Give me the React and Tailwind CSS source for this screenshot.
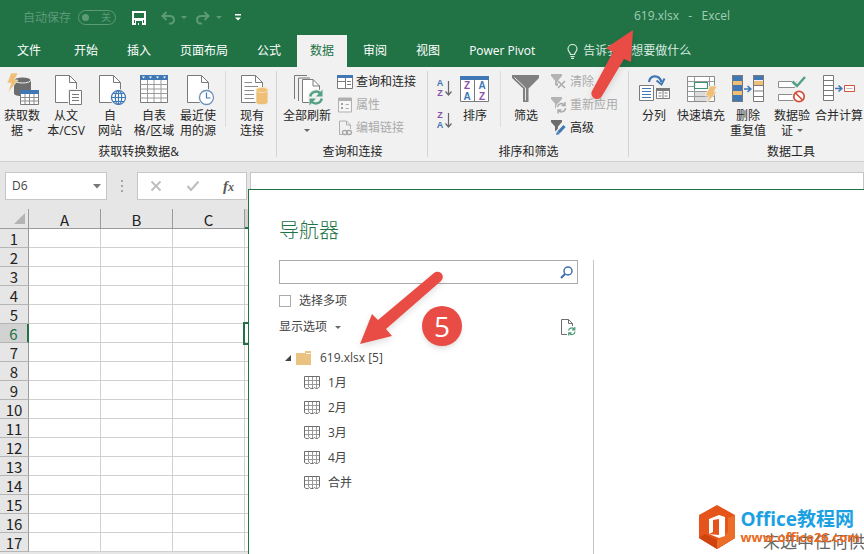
import { useState } from "react";
import clsx from "clsx";

const TABS = ["开始", "插入", "页面布局", "公式", "数据", "审阅", "视图", "Power Pivot"];
const COLUMNS = ["A", "B", "C", "D"];
const ROWS = Array.from({ length: 17 }, (_, i) => i + 1);
const SHEETS = ["1月", "2月", "3月", "4月", "合并"];

/* ---------- icons ---------- */

function Icon({ size = 32, children }) {
  return (
    <svg width={size} height={size} viewBox={`0 0 ${size} ${size}`} fill="none" className="shrink-0 overflow-visible" aria-hidden="true">
      {children}
    </svg>
  );
}

function Page({ x = 5.5 }) {
  return (
    <g transform={`translate(${x} 2.5)`} stroke="#7a7a7a">
      <path d="M0 0H14L21 7V27H0Z" fill="#fff" />
      <path d="M14 0V7H21" />
    </g>
  );
}

function Caret({ className = "text-[#666666]" }) {
  return (
    <svg width="6" height="3" viewBox="0 0 6 3" className={clsx("shrink-0", className)} aria-hidden="true">
      <path d="M0 0H6L3 3Z" fill="currentColor" />
    </svg>
  );
}

const GetDataIcon = () => (
  <Icon>
    <path d="M8 7V20.500C8 24 25 24 25 20.500V7Z" fill="#6d6d6d" />
    <ellipse cx="16.500" cy="7" rx="8.500" ry="3" fill="#6d6d6d" stroke="#f1f1f1" />
    <path d="M5 0H12L8.500 7H12L2 20L5 10H1Z" fill="#eebf74" stroke="#f1f1f1" strokeWidth="0.6" />
    <path d="M14.500 17.500H32.500V31.500H14.500Z" fill="#fff" stroke="#7a7a7a" />
    <path d="M14 17H33V21H14Z" fill="#3f78b5" />
    <path d="M14.500 24.500H32.500M14.500 28H32.500M19 21V31M23.500 21V31M28 21V31" stroke="#8c8c8c" />
  </Icon>
);

const FromTextIcon = () => (
  <Icon>
    <Page />
    <path d="M18 16H33V32H18Z" fill="#f1f1f1" />
    <path d="M19.500 17.500H31.500V31.500H19.500Z" fill="#fff" stroke="#7a7a7a" />
    <path d="M22 21.500H29M22 24.500H29M22 27.500H29" stroke="#7a7a7a" />
  </Icon>
);

const FromWebIcon = () => (
  <Icon>
    <Page />
    <circle cx="24.500" cy="24.500" r="8.500" fill="#f1f1f1" />
    <g stroke="#3f78b5" strokeWidth="1.2">
      <circle cx="24.500" cy="24.500" r="7" fill="#fff" />
      <ellipse cx="24.500" cy="24.500" rx="3.200" ry="7" />
      <path d="M17.500 24.500H31.500M24.500 17.500V31.500M19 20.500H30M19 28.500H30" />
    </g>
  </Icon>
);

const FromTableIcon = () => (
  <Icon>
    <path d="M2.500 2.500H29.500V29.500H2.500Z" fill="#fff" stroke="#7a7a7a" />
    <path d="M2 2H30V7H2Z" fill="#3f78b5" />
    <path d="M4 3.500H7L5.500 5.500ZM11 3.500H14L12.500 5.500ZM18 3.500H21L19.500 5.500ZM25 3.500H28L26.500 5.500Z" fill="#fff" />
    <path d="M2.500 11.500H29.500M2.500 16H29.500M2.500 20.500H29.500M2.500 25H29.500M9.500 7V29M16 7V29M23 7V29" stroke="#9a9a9a" />
  </Icon>
);

const RecentIcon = () => (
  <Icon>
    <Page />
    <circle cx="24.500" cy="24.500" r="8.500" fill="#f1f1f1" />
    <circle cx="24.500" cy="24.500" r="7" fill="#fff" stroke="#6b93bd" strokeWidth="1.300" />
    <path d="M24.500 19.500V25H28.500" stroke="#3f78b5" strokeWidth="1.200" />
  </Icon>
);

const ConnectionsIcon = () => (
  <Icon>
    <Page />
    <path d="M8.500 9.500H16M8.500 13.500H22M8.500 17.500H18M8.500 21.500H18M8.500 25.500H18" stroke="#8c8c8c" />
    <path d="M20 17V29.500C20 32.500 32 32.500 32 29.500V17Z" fill="#eebf74" stroke="#f1f1f1" strokeWidth="0.800" />
    <ellipse cx="26" cy="17" rx="6" ry="2.500" fill="#eebf74" stroke="#f8e3bf" />
  </Icon>
);

const RefreshAllIcon = () => (
  <Icon>
    <path d="M3.500 26V2.500H16M7.500 28V5H19" stroke="#7a7a7a" />
    <path d="M11.500 6.500H22L28.500 13V29.500H11.500Z" fill="#fff" stroke="#7a7a7a" />
    <path d="M22 6.500V13H28.500" stroke="#7a7a7a" />
    <circle cx="25" cy="24.500" r="8.500" fill="#f1f1f1" />
    <path d="M19.200 23.500A6 6 0 0 1 29.500 20.500M30.800 25.500A6 6 0 0 1 20.500 28.500" stroke="#55a183" strokeWidth="2.400" />
    <path d="M31.500 16.500V23.500H25ZM18.500 32.500V25.500H25Z" fill="#55a183" />
  </Icon>
);

const SortIcon = () => (
  <Icon>
    <path d="M1.500 3.500H29.500V28.500H1.500ZM15.500 6V28" fill="#fff" stroke="#7a7a7a" />
    <path d="M1 3H30V7H1Z" fill="#3f78b5" />
    <g className="font-['Liberation_Sans'] text-[10px] font-bold" textAnchor="middle">
      <text x="8" y="16" fill="#8a52ab">Z</text>
      <text x="8" y="27" fill="#3f78b5">A</text>
      <text x="23" y="16" fill="#3f78b5">A</text>
      <text x="23" y="27" fill="#8a52ab">Z</text>
    </g>
  </Icon>
);

const SortLettersIcon = ({ top, bottom }) => (
  <svg width="16" height="18" viewBox="0 0 16 18" fill="none" className="overflow-visible" aria-hidden="true">
    <g className="font-['Liberation_Sans'] text-[9px] font-bold" textAnchor="middle">
      <text x="4" y="7" fill={top === "A" ? "#3f78b5" : "#8a52ab"}>{top}</text>
      <text x="4" y="17" fill={bottom === "A" ? "#3f78b5" : "#8a52ab"}>{bottom}</text>
    </g>
    <path d="M12.500 2V16M9.500 12.500L12.500 16L15.500 12.500" stroke="#666" strokeWidth="1.200" />
  </svg>
);

const FilterIcon = () => (
  <Icon>
    <path d="M2 2H29V5L18.500 15.500V29H13V15.500L2 5Z" fill="#808080" />
    <path d="M4.500 4.500L15.500 15V27.500" stroke="#e6e6e6" />
  </Icon>
);

const SplitIcon = () => (
  <Icon>
    <path d="M1.500 12.500H15.500V27.500H1.500Z" fill="#fff" stroke="#7a7a7a" />
    <path d="M4 15.500H13M4 18.500H13M4 21.500H13M4 24.500H13" stroke="#3f78b5" />
    <path d="M18.500 15.500H31.500V25.500H18.500Z" fill="#fff" stroke="#7a7a7a" />
    <path d="M18 15H32V18H18Z" fill="#7a7a7a" />
    <path d="M20.500 20H23.500M20.500 23H23.500M26.500 20H29.500M26.500 23H29.500M25 18V25" stroke="#7a7a7a" />
    <path d="M11 9C12 2 21 1 23.500 9" stroke="#3f78b5" strokeWidth="2.200" />
    <path d="M18.500 7.500L23.500 11.500L26.500 5.500" stroke="#3f78b5" strokeWidth="2" />
  </Icon>
);

const FlashFillIcon = () => (
  <Icon>
    <path d="M2.500 3.500H29.500V28.500H2.500Z" fill="#fff" stroke="#8c8c8c" />
    <path d="M10 18H24V28H10Z" fill="#dcdcdc" />
    <path d="M2.500 8.500H29.500M2.500 18.500H29.500M2.500 23.500H29.500M9.500 3V28M2.500 13.500H9M24.500 3V15" stroke="#9a9a9a" />
    <path d="M9.500 9.500H22.500V15.500H9.500Z" fill="#fff" stroke="#3f9470" strokeWidth="1.200" />
    <path d="M25 13H32L29 19H32L21 31L24 23H20Z" fill="#eebf74" stroke="#f1f1f1" strokeWidth="0.800" />
  </Icon>
);

const RemoveDuplicatesIcon = () => (
  <Icon>
    <path d="M0 2H11V29H0ZM21 2H32V7H21Z" fill="#3f78b5" />
    <path d="M1 8H10V12H1ZM1 18H10V22H1ZM22 8H31V12H22Z" fill="#eebf74" />
    <path d="M0.500 2.500H10.500V28.500H0.500ZM21.500 2.500H31.500V28.500H21.500Z" stroke="#7a7a7a" />
    <path d="M22 13H31V28H22Z" fill="#fff" />
    <path d="M22 12.500H31M22 18H31M22 23.500H31" stroke="#7a7a7a" />
    <path d="M12 16H18M15.500 13L18.800 16L15.500 19" stroke="#3f78b5" strokeWidth="1.600" />
  </Icon>
);

const ValidationIcon = () => (
  <Icon>
    <path d="M2.500 8.500H20.500V14.500H2.500ZM2.500 21.500H20.500V27.500H2.500Z" fill="#fff" stroke="#8c8c8c" />
    <path d="M16.500 8L21 13L29 4" stroke="#f1f1f1" strokeWidth="5" />
    <path d="M16.500 8.500L21 13L29 4" stroke="#55a183" strokeWidth="2.500" />
    <circle cx="23" cy="23.500" r="7" fill="#f1f1f1" />
    <circle cx="23" cy="23.500" r="5.200" fill="#fff" stroke="#d0513c" strokeWidth="1.700" />
    <path d="M19.500 20L26.500 27" stroke="#d0513c" strokeWidth="1.700" />
  </Icon>
);

const ConsolidateIcon = () => (
  <Icon>
    <path d="M0.500 2.500H10.500V27.500H0.500ZM0.500 7.500H10.500M0.500 12.500H10.500M0.500 17.500H10.500M0.500 22.500H10.500" fill="#fff" stroke="#7a7a7a" />
    <path d="M12 15.500H18M15.500 12.500L18.800 15.500L15.500 18.500" stroke="#3f78b5" strokeWidth="1.600" />
    <path d="M21.500 12.500H31.500V18.500H21.500Z" fill="#fff" stroke="#d0513c" />
    <path d="M23.500 15.500H29.500" stroke="#bbb" />
  </Icon>
);

const QueriesIcon = () => (
  <Icon size={16}>
    <path d="M0.500 1.500H15.500V14.500H0.500Z" fill="#fff" stroke="#7a7a7a" />
    <path d="M0 1H16V4H0Z" fill="#3f78b5" />
    <path d="M0.500 7.500H8M8.500 4V14M10 7.500H14M10 10.500H14" stroke="#7a7a7a" />
  </Icon>
);

const PropertiesIcon = () => (
  <Icon size={16}>
    <path d="M1.500 1H14.500V15H1.500Z" fill="#f6f6f6" stroke="#b0b0b0" />
    <path d="M1 1H15V4H1Z" fill="#b0b0b0" />
    <path d="M4 6H6V8H4ZM4 10H6V12H4Z" fill="#a0a0a0" />
    <path d="M8.500 7.500H12M8.500 11.500H12" stroke="#b0b0b0" />
  </Icon>
);

const EditLinksIcon = () => (
  <Icon size={16}>
    <path d="M6 14.500H2.500V1H9.500L13.500 5V9M9.500 1V5H13.500" stroke="#b0b0b0" />
    <rect x="5.500" y="10.500" width="5" height="4" rx="2" stroke="#a8a8a8" strokeWidth="1.300" />
    <rect x="9.500" y="10.500" width="5" height="4" rx="2" stroke="#a8a8a8" strokeWidth="1.300" />
  </Icon>
);

const SmallFunnel = ({ color, children }) => (
  <Icon size={16}>
    <path d="M0 0H11V2L7 6.500V13L4 11V6.500L0 2Z" fill={color} />
    {children}
  </Icon>
);

const ClearIcon = () => (
  <SmallFunnel color="#b4b4b4">
    <path d="M7 7L14 14M14 7L7 14" stroke="#f1f1f1" strokeWidth="3.500" />
    <path d="M7 7L14 14M14 7L7 14" stroke="#ababab" strokeWidth="1.600" />
  </SmallFunnel>
);

const ReapplyIcon = () => (
  <SmallFunnel color="#b4b4b4">
    <circle cx="10.500" cy="10.500" r="5.500" fill="#f1f1f1" />
    <path d="M6.500 10A4 4 0 0 1 13.500 8M14.500 11A4 4 0 0 1 7.500 13.500M14 5V8.500H10.500M7 16.500V13H10.500" stroke="#ababab" strokeWidth="1.500" />
  </SmallFunnel>
);

const AdvancedIcon = () => (
  <SmallFunnel color="#6d6d6d">
    <path d="M6 14L14 5.500" stroke="#f1f1f1" strokeWidth="6" />
    <path d="M7.500 12.500L13.500 6" stroke="#3f78b5" strokeWidth="3.200" />
    <path d="M5 15L6 11.500L8.800 14Z" fill="#3f78b5" />
  </SmallFunnel>
);

const SheetIcon = () => (
  <Icon size={16}>
    <path d="M0.500 1.500H15.500V11.500C14.500 14 11.500 14 10.500 12.500C9.500 14 6.500 14 5.500 12.500C4.500 14 2 14 0.500 12.500Z" fill="#fff" stroke="#6d6d6d" />
    <path d="M1 5.500H15M1 9.500H15M4.500 2V12M8.500 2V13M12.500 2V13" stroke="#999" />
  </Icon>
);

/* ---------- ribbon ---------- */

function BigButton({ icon, lines, caret, caretBelow, wide }) {
  return (
    <button type="button" className={clsx("flex flex-col items-center gap-[3px] pt-[6px] shrink-0", wide ? "w-[50px]" : "w-11")}>
      {icon}
      <span className="flex flex-col items-center leading-[15px] whitespace-nowrap">
        {lines.map((line, i) => (
          <span key={line} className="flex items-center gap-1">
            {line}
            {caret && i === lines.length - 1 && <Caret />}
          </span>
        ))}
        {caretBelow && <span className="flex h-[15px] items-center"><Caret /></span>}
      </span>
    </button>
  );
}

function SmallButton({ icon, label, disabled }) {
  return (
    <button type="button" disabled={disabled} className={clsx("flex h-[23px] items-center gap-[3px] whitespace-nowrap", disabled && "text-[#ababab]")}>
      {icon}
      {label}
    </button>
  );
}

function Group({ label, className, children }) {
  return (
    <section className={clsx("relative flex shrink-0 flex-col", className)}>
      <div className="flex h-[76px] items-start">{children}</div>
      <h2 className="text-center leading-[18px]">{label}</h2>
      <div className="absolute top-1 right-0 bottom-1 w-px bg-[#d4d4d4]" />
    </section>
  );
}

const Divider = () => <div className="mt-1 h-[56px] w-px shrink-0 bg-[#dcdcdc]" />;

function Ribbon() {
  return (
    <div className="flex h-[95px] shrink-0 overflow-hidden border-b border-[#d0d0d0] bg-[#f1f1f1] text-[#262626]">
      <Group label="获取转换数据&" className="w-[277px]">
        <BigButton icon={<GetDataIcon />} lines={["获取数", "据"]} caret />
        <BigButton icon={<FromTextIcon />} lines={["从文", "本/CSV"]} />
        <BigButton icon={<FromWebIcon />} lines={["自", "网站"]} />
        <BigButton icon={<FromTableIcon />} lines={["自表", "格/区域"]} />
        <BigButton icon={<RecentIcon />} lines={["最近使", "用的源"]} />
        <div className="flex gap-1 pl-[5px]">
          <Divider />
          <BigButton icon={<ConnectionsIcon />} lines={["现有", "连接"]} />
        </div>
      </Group>
      <Group label="查询和连接" className="w-[151px]">
        <div className="flex pl-[5px]">
          <BigButton icon={<RefreshAllIcon />} lines={["全部刷新"]} caretBelow wide />
        </div>
        <div className="flex flex-col pt-[3px] pl-[5px]">
          <SmallButton icon={<QueriesIcon />} label="查询和连接" />
          <SmallButton icon={<PropertiesIcon />} label="属性" disabled />
          <SmallButton icon={<EditLinksIcon />} label="编辑链接" disabled />
        </div>
      </Group>
      <Group label="排序和筛选" className="w-[201px]">
        <div className="flex flex-col gap-[14px] pt-[12px] pl-2">
          <button type="button" aria-label="升序"><SortLettersIcon top="A" bottom="Z" /></button>
          <button type="button" aria-label="降序"><SortLettersIcon top="Z" bottom="A" /></button>
        </div>
        <div className="flex gap-[3px] pl-[1px]">
          <BigButton icon={<SortIcon />} lines={["排序"]} />
          <Divider />
          <BigButton icon={<FilterIcon />} lines={["筛选"]} />
        </div>
        <div className="flex flex-col pt-[3px] pl-[3px]">
          <SmallButton icon={<ClearIcon />} label="清除" disabled />
          <SmallButton icon={<ReapplyIcon />} label="重新应用" disabled />
          <SmallButton icon={<AdvancedIcon />} label="高级" />
        </div>
      </Group>
      <Group label="数据工具" className="w-[324px]">
        <div className="flex pl-[3px]">
          <BigButton icon={<SplitIcon />} lines={["分列"]} />
          <BigButton icon={<FlashFillIcon />} lines={["快速填充"]} wide />
          <BigButton icon={<RemoveDuplicatesIcon />} lines={["删除", "重复值"]} />
          <BigButton icon={<ValidationIcon />} lines={["数据验", "证"]} caret />
          <BigButton icon={<ConsolidateIcon />} lines={["合并计算"]} wide />
        </div>
      </Group>
    </div>
  );
}

/* ---------- header ---------- */

function TitleBar() {
  return (
    <div className="flex h-[35px] items-center justify-between pr-[134px] pl-[23px] text-[#5d9a78]">
      <div className="flex items-center">
        <span>自动保存</span>
        <button type="button" className="ml-[7px] flex h-[15px] w-[38px] items-center justify-between rounded-full border border-[#5d9a78] pr-1 pl-[3px] text-[10px]">
          <span className="size-[7px] rounded-full bg-[#5d9a78]" />
          关
        </button>
        <button type="button" aria-label="保存" className="ml-4">
          <svg width="14" height="14" viewBox="0 0 14 14" fill="none">
            <path d="M1 1H13V13H1Z" stroke="#fff" strokeWidth="2" />
            <path d="M1 7H13V9H1ZM3 9H11V13H3Z" fill="#fff" />
            <path d="M4 10H10V14H7V12H6V14H4Z" fill="#217346" />
          </svg>
        </button>
        <button type="button" aria-label="撤消" className="ml-[15px]">
          <svg width="14" height="14" viewBox="0 0 14 14" fill="none" stroke="currentColor" strokeWidth="2">
            <path d="M5.500 1L1.500 5L5.500 9M1.500 5H8.500C11.500 5 13 6.500 13 9C13 11.500 11 13 8 12.500" />
          </svg>
        </button>
        <span className="ml-[6px]"><Caret className="text-[#5d9a78]" /></span>
        <button type="button" aria-label="恢复" className="ml-[9px]">
          <svg width="14" height="14" viewBox="0 0 14 14" fill="none" stroke="currentColor" strokeWidth="2">
            <path d="M8.500 1L12.500 5L8.500 9M12.500 5H5.500C2.500 5 1 6.500 1 9C1 11.500 3 13 6 12.500" />
          </svg>
        </button>
        <span className="ml-[6px]"><Caret className="text-[#5d9a78]" /></span>
        <button type="button" aria-label="自定义快速访问工具栏" className="ml-[13px]">
          <svg width="6" height="7" viewBox="0 0 6 7" fill="#fff">
            <path d="M0 0H6V1.500H0ZM0 3.500H6L3 6.500Z" />
          </svg>
        </button>
      </div>
      <h1 className="-mt-1 whitespace-pre text-[#a3cdb4]">{"619.xlsx   -   Excel"}</h1>
    </div>
  );
}

function TabBar() {
  const [active, setActive] = useState("数据");
  return (
    <nav className="flex h-8 gap-[3px] pl-1 whitespace-nowrap text-white">
      <button type="button" className="mr-1 px-[13px]">文件</button>
      {TABS.map((tab) => (
        <button
          key={tab}
          type="button"
          onClick={() => setActive(tab)}
          className={clsx("px-[13px]", tab === active && "bg-[#f1f1f1] text-[#217346]")}
        >
          {tab}
        </button>
      ))}
      <button type="button" className="flex items-center gap-[5px] pl-4 text-[#d9eae0]">
        <svg width="11" height="15" viewBox="0 0 11 15" fill="none" stroke="currentColor" strokeWidth="1.200">
          <path d="M3.500 10.500C3.500 8.500 1 7.500 1 5A4.500 4.500 0 0 1 10 5C10 7.500 7.500 8.500 7.500 10.500ZM3.500 12.500H7.500M4 14.300H7" />
        </svg>
        告诉我您想要做什么
      </button>
    </nav>
  );
}

/* ---------- sheet ---------- */

function FormulaBar() {
  return (
    <div className="flex shrink-0 items-center pt-[10px] pb-[9px] pl-[5px]">
      <div className="flex h-[28px] w-[102px] items-center border border-[#c6c6c6] bg-white pr-[5px] pl-[6px]">
        <input aria-label="名称框" defaultValue="D6" className="w-full min-w-0 bg-transparent text-[#444444] outline-none" />
        <button type="button" aria-label="展开名称框">
          <svg width="8" height="5" viewBox="0 0 8 5"><path d="M0 0H8L4 4.500Z" fill="#777" /></svg>
        </button>
      </div>
      <div className="mx-[14px] flex flex-col gap-[3px]">
        <span className="size-[2px] bg-[#a6a6a6]" />
        <span className="size-[2px] bg-[#a6a6a6]" />
        <span className="size-[2px] bg-[#a6a6a6]" />
      </div>
      <div className="flex h-[28px] w-[110px] items-center justify-between border border-[#c6c6c6] bg-white px-3">
        <button type="button" aria-label="取消">
          <svg width="12" height="12" viewBox="0 0 12 12" stroke="#bdbdbd" strokeWidth="1.800"><path d="M1.500 1.500L10.500 10.500M10.500 1.500L1.500 10.500" /></svg>
        </button>
        <button type="button" aria-label="输入">
          <svg width="14" height="12" viewBox="0 0 14 12" fill="none" stroke="#bdbdbd" strokeWidth="2"><path d="M1.500 6L5 10L12.500 1.500" /></svg>
        </button>
        <button type="button" className="font-['Liberation_Serif',serif] text-[15px] leading-4 font-bold text-[#5a5a5a] italic">
          f<span className="text-[12px]">x</span>
        </button>
      </div>
      <input aria-label="编辑栏" className="ml-[3px] h-[28px] min-w-0 flex-1 border border-[#c6c6c6] bg-white outline-none" />
    </div>
  );
}

function Sheet() {
  return (
    <table className="w-full table-fixed border-separate border-spacing-0 text-[15px] leading-4 text-[#222222]">
      <thead>
        <tr className="h-5">
          <th className="w-[29px] border-r border-b border-[#9b9b9b] bg-[#e6e6e6] p-0">
            <svg width="12" height="12" viewBox="0 0 12 12" className="ml-[14px]"><path d="M11 0V11H0Z" fill="#b4b4b4" /></svg>
          </th>
          {COLUMNS.map((col) => (
            <th
              key={col}
              className={clsx(
                "border-b p-0 pt-[2px] font-normal",
                col === "D" ? "border-b-2 border-b-[#217346] bg-[#d2d2d2] text-[#217346]" : "w-[72px] border-r border-[#9b9b9b] bg-[#e6e6e6]"
              )}
            >
              {col}
            </th>
          ))}
        </tr>
      </thead>
      <tbody>
        {ROWS.map((row) => (
          <tr key={row} className="h-[19px]">
            <th
              className={clsx(
                "border-b border-b-[#b5b5b5] p-0 pt-[2px] font-normal",
                row === 6 ? "border-r-2 border-r-[#217346] bg-[#d2d2d2] text-[#217346]" : "border-r border-r-[#9b9b9b] bg-[#e6e6e6]"
              )}
            >
              {row}
            </th>
            {COLUMNS.map((col) => (
              <td
                key={col}
                className={clsx(
                  "border-r border-b border-[#d0d0d0] bg-white p-0",
                  row === 6 && col === "D" && "outline-2 outline-[#217346]"
                )}
              />
            ))}
          </tr>
        ))}
      </tbody>
    </table>
  );
}

/* ---------- navigator dialog ---------- */

function Navigator() {
  return (
    <div role="dialog" aria-label="导航器" className="absolute top-[189px] right-0 bottom-0 left-[248px] overflow-hidden border-t border-l border-[#217346] bg-white text-[#444444]">
      <div className="flex h-full flex-col pt-[26px] pl-[30px]">
        <h2 className="text-[20px] leading-[30px] font-light text-[#217346]">导航器</h2>
        <div className="mt-[14px] flex min-h-0 flex-1">
          <div className="flex w-[299px] flex-col">
            <div className="flex h-6 shrink-0 items-center border border-[#ababab] pr-1">
              <input aria-label="搜索" className="min-w-0 flex-1 outline-none" />
              <button type="button" aria-label="开始搜索">
                <svg width="13" height="13" viewBox="0 0 13 13" fill="none" stroke="#3f6fb0">
                  <circle cx="8" cy="5" r="4" strokeWidth="1.500" />
                  <path d="M5 8L1 12" strokeWidth="2.200" />
                </svg>
              </button>
            </div>
            <label className="mt-2 flex h-[18px] items-center gap-2">
              <input type="checkbox" className="size-3 appearance-none border border-[#ababab] bg-white checked:bg-[#217346]" />
              选择多项
            </label>
            <div className="mt-2 flex h-[18px] items-center justify-between pr-[2px]">
              <button type="button" className="flex items-center gap-2">
                显示选项
                <Caret />
              </button>
              <button type="button" aria-label="刷新">
                <svg width="15" height="17" viewBox="0 0 15 17" fill="none">
                  <path d="M6 15.500H0.500V0.500H7.500L11.500 4.500V7M7.500 0.500V4.500H11.500" stroke="#6d6d6d" />
                  <path d="M7.500 11.500A3.200 3.200 0 0 1 13 10M14 12.500A3.200 3.200 0 0 1 8.500 14.500M13.800 8V10.800H11M7.700 16.500V13.800H10.500" stroke="#4f9a7a" strokeWidth="1.200" />
                </svg>
              </button>
            </div>
            <ul className="mt-[9px] leading-[25px]">
              <li>
                <button type="button" className="flex items-center pl-[6px]">
                  <svg width="6" height="6" viewBox="0 0 6 6"><path d="M6 0V6H0Z" fill="#444" /></svg>
                  <svg width="16" height="14" viewBox="0 0 16 14" className="mr-2 ml-[5px]">
                    <path d="M0 2H9V0H15V14H0Z" fill="#eac282" />
                    <path d="M10 2.500H14.500" stroke="#fff" />
                  </svg>
                  619.xlsx [5]
                </button>
                <ul>
                  {SHEETS.map((name) => (
                    <li key={name}>
                      <button type="button" className="flex items-center gap-2 pl-[25px]">
                        <SheetIcon />
                        {name}
                      </button>
                    </li>
                  ))}
                </ul>
              </li>
            </ul>
          </div>
          <div className="ml-[15px] flex min-w-0 flex-1 flex-col justify-end overflow-hidden border-l border-[#c6c6c6]">
            <p className="pl-[169px] text-[17px] leading-[24px] whitespace-nowrap text-[#666666]">未选中任何供</p>
          </div>
        </div>
      </div>
    </div>
  );
}

function Watermark() {
  return (
    <div className="absolute right-1 bottom-[5px] flex items-center gap-[5px] font-bold whitespace-nowrap">
      <svg width="36" height="44" viewBox="0 0 36 44">
        <path d="M18 0L36 10V33L18 44L0 33V10Z" fill="#e4541b" />
        <path d="M0 33L18 44L36 33L30 29L18 35L6 29Z" fill="#cf430f" />
        <path d="M36 10V33L18 44V35L29 27V13Z" fill="#ec6c2a" />
        <path d="M10 14L20 10L26 12V31L20 33L10 29L20 30V14L14 15V27L10 29Z" fill="#fff" />
      </svg>
      <div className="flex flex-col">
        <span className="text-[19px] leading-5 text-[#1ba1e2]">Office教程网</span>
        <span className="text-[13px] leading-4 text-[#ea6a20]">www.office26.com</span>
      </div>
    </div>
  );
}

function Callouts() {
  return (
    <>
      <svg width="50" height="74" viewBox="0 0 50 74" className="pointer-events-none absolute top-[28px] left-[587px] drop-shadow-md" aria-hidden="true">
        <path d="M46 2L19 20L26 24L5 63A5.500 5.500 0 0 0 15 68L37 31L44 34Z" fill="#e84c45" />
      </svg>
      <svg width="90" height="80" viewBox="0 0 90 80" className="pointer-events-none absolute top-[268px] left-[356px] drop-shadow-md" aria-hidden="true">
        <path d="M4 76L16 46L22 52L78 5A5 5 0 0 1 85 13L30 61L36 68Z" fill="#e84c45" />
      </svg>
      <div className="absolute top-[306px] left-[422px] flex size-10 items-center justify-center rounded-full bg-[#e84c45] text-[28px] leading-none font-medium text-white shadow-md">
        5
      </div>
    </>
  );
}

export default function App() {
  return (
    <div className="relative flex h-screen flex-col overflow-hidden bg-[#e6e6e6] font-['Open_Sans','Noto_Sans_CJK_SC',sans-serif] text-xs">
      <header className="shrink-0 bg-[#217346]">
        <TitleBar />
        <TabBar />
      </header>
      <Ribbon />
      <FormulaBar />
      <div className="font-['Noto_Sans_CJK_SC',sans-serif]">
        <Sheet />
      </div>
      <Navigator />
      <Watermark />
      <Callouts />
    </div>
  );
}
